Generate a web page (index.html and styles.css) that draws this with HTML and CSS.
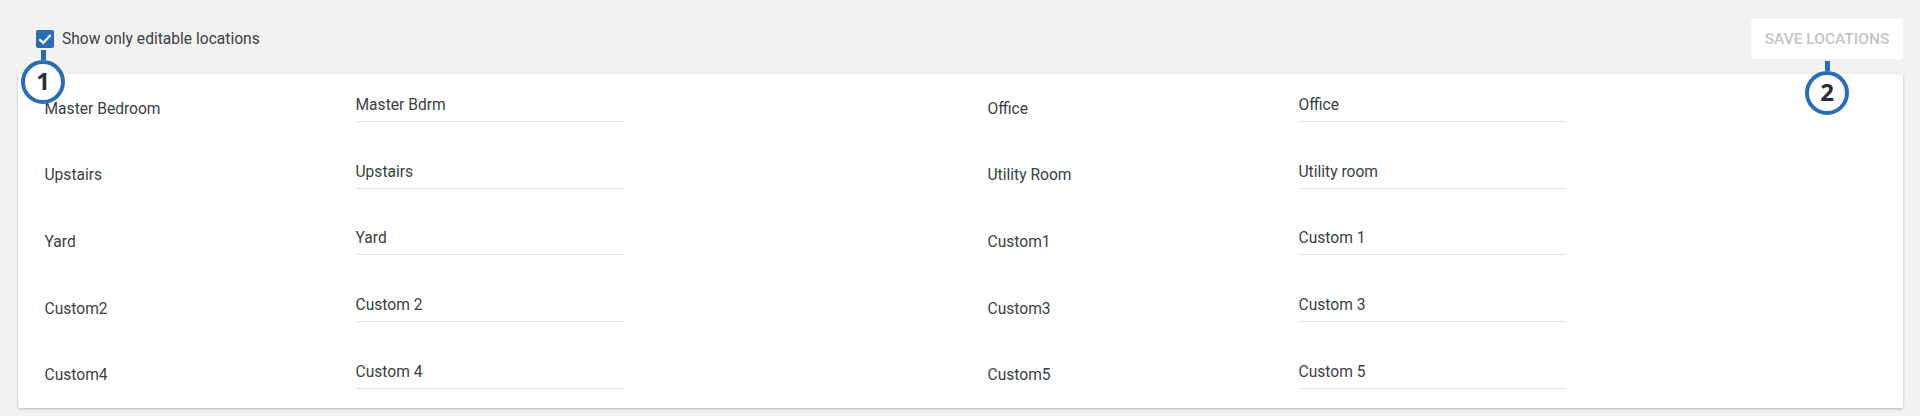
FILE: index.html
```html
<!DOCTYPE html>
<html lang="en">
<head>
<meta charset="utf-8">
<title>Locations</title>
<link rel="stylesheet" href="styles.css">
</head>
<body>
<main class="page">
  <header class="toolbar">
    <label class="check">
      <span class="box">
        <svg viewBox="0 0 18 18" width="18" height="18"><path d="M3.4 9.2l3.8 3.7 7.4-7.8" fill="none" stroke="#fff" stroke-width="2.2"/></svg>
      </span>
      <span class="check-text">Show only editable locations</span>
    </label>
    <button class="save" type="button">SAVE LOCATIONS</button>
  </header>
  <section class="card">
    <div class="row"><span class="name">Master Bedroom</span><span class="field">Master Bdrm</span></div>
    <div class="row"><span class="name">Office</span><span class="field">Office</span></div>
    <div class="row"><span class="name">Upstairs</span><span class="field">Upstairs</span></div>
    <div class="row"><span class="name">Utility Room</span><span class="field">Utility room</span></div>
    <div class="row"><span class="name">Yard</span><span class="field">Yard</span></div>
    <div class="row"><span class="name">Custom1</span><span class="field">Custom 1</span></div>
    <div class="row"><span class="name">Custom2</span><span class="field">Custom 2</span></div>
    <div class="row"><span class="name">Custom3</span><span class="field">Custom 3</span></div>
    <div class="row"><span class="name">Custom4</span><span class="field">Custom 4</span></div>
    <div class="row"><span class="name">Custom5</span><span class="field">Custom 5</span></div>
  </section>
  <div class="callout callout-one"><span class="stem"></span><span class="badge">1</span></div>
  <div class="callout callout-two"><span class="stem"></span><span class="badge">2</span></div>
</main>
</body>
</html>
```

FILE: styles.css
```css
* { box-sizing: border-box; }
html, body { margin: 0; height: 100%; }
body {
  background: #f2f2f2;
  font-family: Roboto, "Liberation Sans", sans-serif;
  color: #3c4043;
  overflow: hidden;
}
.page {
  position: relative;
  height: 416px;
  padding: 19px 17px 0 18px;
}
.toolbar {
  display: flex;
  justify-content: space-between;
  align-items: center;
  height: 40px;
  margin-bottom: 15px;
}
.check {
  display: flex;
  align-items: center;
  gap: 8px;
  padding-left: 18px;
  margin-top: -1px;
}
.box {
  width: 18px;
  height: 18px;
  border-radius: 2px;
  background: #2a6db5;
  display: block;
}
.box svg { display: block; }
.check-text { font-size: 15.6px; line-height: 20px; }
.save {
  width: 152px;
  height: 40px;
  border: 0;
  border-radius: 2px;
  padding: 0;
  background: #fff;
  color: #c4c4c4;
  font-family: inherit;
  font-size: 15.5px;
  font-weight: 500;
}
.card {
  display: grid;
  grid-template-columns: 943px 943px;
  grid-auto-rows: 66.7px;
  height: 334px;
  background: #fff;
  border-radius: 2px;
  box-shadow: 0 1px 3px rgba(0, 0, 0, 0.25);
}
.row {
  display: flex;
  padding-left: 26.5px;
}
.name {
  width: 311px;
  font-size: 15.6px;
  line-height: 20px;
  padding-top: 24.5px;
}
.field {
  width: 267px;
  height: 48px;
  padding-top: 21px;
  font-size: 15.6px;
  line-height: 20px;
  border-bottom: 1.5px solid #e2e2e2;
}
.callout {
  position: absolute;
  display: flex;
  flex-direction: column;
  align-items: center;
  width: 44px;
}
.callout-one { left: 21px; top: 50px; }
.callout-two { left: 1805px; top: 61px; }
.stem {
  width: 5px;
  height: 10px;
  background: #2a6db5;
}
.badge {
  width: 44px;
  height: 44px;
  border: 4.5px solid #2a6db5;
  border-radius: 50%;
  background: #fff;
  color: #2a2e36;
  font-family: "Open Sans", Roboto, sans-serif;
  font-size: 24px;
  font-weight: 700;
  line-height: 34px;
  text-align: center;
}
```
